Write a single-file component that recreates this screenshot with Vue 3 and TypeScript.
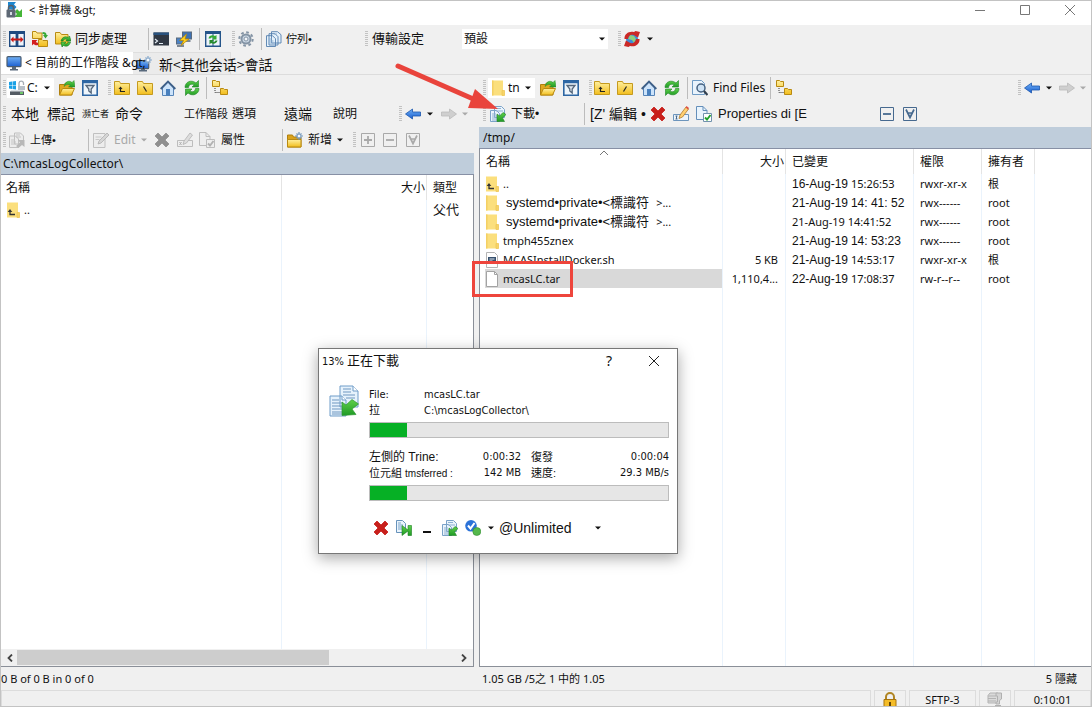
<script setup lang="ts">
interface RemoteFile {
  icon: string
  name: string
  size: string
  date: string
  time: string
  rights: string
  owner: string
  dateStyle: string
  timeStyle: string
  nameStyle: string
  selected?: boolean
}

const files: RemoteFile[] = [
  { icon: 'up-dir', name: '..', size: '', date: '16-Aug-19', time: '15:26:53', rights: 'rwxr-xr-x', owner: '根', dateStyle: 'arial', timeStyle: 'small', nameStyle: '' },
  { icon: 'dir', name: 'systemd•private•<標識符', size: '', date: '21-Aug-19', time: '14: 41: 52', rights: 'rwx------', owner: 'root', dateStyle: 'arial', timeStyle: 'arial', nameStyle: 'wide' },
  { icon: 'dir', name: 'systemd•private•<標識符', size: '', date: '21-Aug-19', time: '14:41:52', rights: 'rwx------', owner: 'root', dateStyle: 'small', timeStyle: 'small', nameStyle: 'wide' },
  { icon: 'dir', name: 'tmph455znex', size: '', date: '21-Aug-19', time: '14: 53:23', rights: 'rwx------', owner: 'root', dateStyle: 'arial', timeStyle: 'arial', nameStyle: '' },
  { icon: 'script', name: 'MCASInstallDocker.sh', size: '5 KB', date: '21-Aug-19', time: '14:53:17', rights: 'rwxr-xr-x', owner: '根', dateStyle: 'arial', timeStyle: 'small', nameStyle: '' },
  { icon: 'file', name: 'mcasLC.tar', size: '1,110,4...', date: '22-Aug-19', time: '17:08:37', rights: 'rw-r--r--', owner: 'root', dateStyle: 'arial', timeStyle: 'small', nameStyle: '', selected: true },
]

const progress = [12.5, 12.5]
</script>

<template>
  <div class="app">
    <svg class="sprite" aria-hidden="true">
      <defs>
        <linearGradient id="gFolder" x1="0" y1="0" x2="0" y2="1"><stop offset="0" stop-color="#fff0a0" /><stop offset="1" stop-color="#f2bd1c" /></linearGradient>
        <linearGradient id="gGreen" x1="0" y1="0" x2="0" y2="1"><stop offset="0" stop-color="#5fd04a" /><stop offset="1" stop-color="#1f9a25" /></linearGradient>
        <linearGradient id="gBlue" x1="0" y1="0" x2="0" y2="1"><stop offset="0" stop-color="#6fb0f5" /><stop offset="1" stop-color="#1b5fd0" /></linearGradient>
      </defs>
      <symbol id="logo" viewBox="0 0 16 16">
        <path d="M2 0h8L8 2.500 10.500 5 8 8 2 7z" fill="#1d87cf" /><path d="M16 15H8l3-3-2-2 2-3 2.500 2.500L16 7z" fill="#45b537" />
        <path d="M2.500 8V6a2.500 2.500 0 0 1 5 0v2" fill="none" stroke="#56606c" stroke-width="1.500" /><rect x=".5" y="7.500" width="9" height="8" rx="1" fill="#5e6875" /><path d="M4 10h2v3H4z" fill="#d5dce4" />
      </symbol>
      <symbol id="split" viewBox="0 0 16 16">
        <path d="M.7.7h6.600v14.600H.7zM8.700.7h6.600v14.600H8.700z" fill="#edf4fb" stroke="#1e4a80" stroke-width="1.400" /><path d="M1 2h6M9 2h6" stroke="#1e4a80" stroke-width="2" />
        <path d="M1.500 8.500 4.500 5.500v2h7v-2l3 3-3 3v-2h-7v2z" fill="#c91815" />
      </symbol>
      <symbol id="compare" viewBox="0 0 16 16">
        <path d="M.5.500h3.500l1 1.500h5v5.500H.5zM6.500 8.500H10l1 1h4.500v6h-9z" fill="url(#gFolder)" stroke="#b98a12" />
        <path d="M10.500 1c3 0 4 1 4 3H16l-2.500 3.500L11 4h1.500c0-1-1-1-2-1z" fill="#34a836" /><path d="M6 11.500c-1 .5-2 0-2-1L5.500 9H0v5.500L1.500 13C3 14.500 5 14.500 6 14z" fill="#d32020" />
      </symbol>
      <symbol id="sync" viewBox="0 0 16 16">
        <path d="M.5 1.500h4.500l1.500 2h6.500v9.500H.5z" fill="url(#gFolder)" stroke="#b98a12" />
        <path d="M6 10c1-4 4.500-5 7-3.500L14.500 5l1.500 5h-5l1-1.500c-1.500-1-3-.5-4 1.500z" fill="url(#gGreen)" stroke="#177a1c" stroke-width=".6" /><path d="M15.500 11c-1 4-4 5-7 3.500L7 16l-1-5h5l-1.500 1.500c1.500 1 3 .5 4-1.500z" fill="url(#gGreen)" stroke="#177a1c" stroke-width=".6" />
      </symbol>
      <symbol id="term" viewBox="0 0 16 16"><rect x=".5" y="1.500" width="15.500" height="13" fill="#303843" /><path d="M.5 1.500H16v2.500H.5z" fill="#29527e" /><path d="m2 8 2.500 2L2 12M6 12.500h4" fill="none" stroke="#e5edf5" stroke-width="1.200" /></symbol>
      <symbol id="putty" viewBox="0 0 16 16">
        <rect x="6.500" y="1" width="9" height="7" fill="#3e72b4" stroke="#5a6a7c" /><path d="M8.500 10h6" stroke="#7c8793" stroke-width="2" /><rect x=".5" y="7" width="7" height="6" fill="#4b82c5" stroke="#5a6a7c" /><path d="M1 15h7" stroke="#7c8793" stroke-width="2" />
        <path d="M10.500 3 3.500 9.500h4L5 14.500 13 8H9z" fill="#ffd01e" stroke="#b68500" stroke-width=".7" />
      </symbol>
      <symbol id="panes-sync" viewBox="0 0 16 16">
        <path d="M.7.7h14.600v14.600H.7z" fill="#edf4fb" stroke="#245489" stroke-width="1.400" /><path d="M1 2h14" stroke="#245489" stroke-width="2" /><path d="M8 2v13" stroke="#245489" />
        <path d="M3.500 7.500c.5-3 4-4 6.500-2.500L11.500 4v4.500H7L8.500 7C7 6.200 5.800 6.500 5.500 7.500z" fill="#36ac35" /><path d="M12.500 9.500c-.5 3-4 4-6.500 2.500L4.500 13.500V9H9l-1.500 1.500c1.500.8 2.700 0 3-1z" fill="#258b2c" />
      </symbol>
      <symbol id="gear" viewBox="0 0 16 16"><circle cx="8" cy="8" r="6.700" fill="none" stroke="#8494a5" stroke-width="2" stroke-dasharray="2.700 2.560" /><circle cx="8" cy="8" r="4.500" fill="#cbd8e5" stroke="#8494a5" stroke-width="2" /><circle cx="8" cy="8" r="2" fill="#f3f6fa" stroke="#8494a5" /></symbol>
      <symbol id="queue" viewBox="0 0 16 16"><path d="M5.500.7h6l3.500 3V12H5.500zM3 2.700h6l3 3V14H3zM.5 4.700h6l3 3v7.800h-9z" fill="#e5f1fb" stroke="#537fae" stroke-width=".9" /><path d="M2.500 8h3M2.500 10h5M2.500 12h5M8 3h3" stroke="#8fb1d2" /></symbol>
      <symbol id="globe" viewBox="0 0 16 16"><circle cx="8" cy="8" r="6" fill="#3f8bda" /><path d="m6 4 4 1 2 3-2 4-2-3-4-1z" fill="#8fd07c" /><path d="M.5 8C0 3 5-.5 10 1l1.500-1 4.500 1-2 5.500-2.500-1.500C8 2.500 4.500 4 4 8z" fill="#cb2927" /><path d="M15.500 8c.5 5-4.500 8.500-9.500 7L4.500 16 0 15l2-5.500L4.500 11c3.500 2.500 7 1 7.500-3z" fill="#cb2927" /></symbol>
      <symbol id="monitor" viewBox="0 0 16 16"><rect x="1" y="1.700" width="14" height="10" rx="1" fill="url(#gBlue)" stroke="#4a5c70" stroke-width="1.200" /><path d="M6 12h4v2H6zM4 14h8v1.500H4z" fill="#58697c" /></symbol>
      <symbol id="new-session" viewBox="0 0 16 16"><rect x=".7" y="4.700" width="12" height="8" rx="1" fill="url(#gBlue)" stroke="#4a5c70" stroke-width="1.200" /><path d="M5 13h4v1H5zM3 14h8v1.500H3z" fill="#58697c" /><path d="M12 0v8M8 4h8M9.500 1.500l5 5M14.500 1.500l-5 5" stroke="#86a8cb" stroke-width="1.200" /><circle cx="12" cy="4" r="2" fill="#f7fbff" stroke="#86a8cb" /></symbol>
      <symbol id="drive" viewBox="0 0 16 16"><path d="m0 2 3-.4V5H0zm3.500-.5L7 1v4H3.500zM0 5.500h3V9l-3-.4zm3.500 0H7v4L3.500 9z" fill="#1ba1e6" /><path d="M10 6V3a2.300 2.300 0 0 1 4.500 0v2" fill="none" stroke="#a6adb5" stroke-width="1.300" /><path d="M9 6h7v4H9z" fill="#b8c0c8" /><path d="M2 10h12l1 2H1z" fill="#dce1e6" /><path d="M1 11.500h14V15H1z" fill="#545b64" /><path d="M11 13h3" stroke="#79ea6d" stroke-width="1.500" /></symbol>
      <symbol id="open" viewBox="0 0 16 16"><path d="M.5 4.500h5l1-1.500h6.500v12H.5z" fill="#e0a820" stroke="#b0800f" /><path d="M3.500 8.500h12l-3 6.500H.5z" fill="url(#gFolder)" stroke="#b98a12" /><path d="M5 6.500C6 1.500 10 0 13 2.500L15 .5 16 7H9.500l1.800-1.800C9 4 7 4.500 5 6.500z" fill="url(#gGreen)" stroke="#24852a" stroke-width=".5" /></symbol>
      <symbol id="filter" viewBox="0 0 16 16"><path d="M.8.8h14.400v14.400H.8z" fill="#eef5fb" stroke="#2d66a3" stroke-width="1.600" /><path d="M1 2h14" stroke="#2d66a3" stroke-width="2.500" /><path d="M4 5.500h8L9.200 9v4L6.800 11V9z" fill="#dfe7ef" stroke="#56687c" stroke-width="1.300" /></symbol>
      <symbol id="parent" viewBox="0 0 16 16"><path d="M.5 1.500h5l1 2h9v11H.5z" fill="url(#gFolder)" stroke="#c59a1e" /><path d="M6.500 8v3.500H11" fill="none" stroke="#222" stroke-width="1.200" /><path d="m4.500 9 2-2.500 2 2.500z" fill="#222" /></symbol>
      <symbol id="root-local" viewBox="0 0 16 16"><path d="M.5 1.500h5l1 2h9v11H.5z" fill="url(#gFolder)" stroke="#c59a1e" /><path d="m6.500 6.500 3 5" stroke="#222" stroke-width="1.200" /></symbol>
      <symbol id="root-remote" viewBox="0 0 16 16"><path d="M.5 1.500h5l1 2h9v11H.5z" fill="url(#gFolder)" stroke="#c59a1e" /><path d="m9.500 6.500-3 5" stroke="#222" stroke-width="1.200" /></symbol>
      <symbol id="home" viewBox="0 0 16 16"><path d="M2.500 7 8 2l5.500 5v8.500h-11z" fill="#cce3fa" stroke="#5684b8" /><path d="M.7 9 8 1.500 15.300 9" fill="none" stroke="#3d5f88" stroke-width="1.900" /><path d="M6 9h4v6.500H6z" fill="#4980bd" /></symbol>
      <symbol id="refresh" viewBox="0 0 16 16"><path d="M1 7.500C1 2 7-1 12 3l2.500-2.500V7H8l2.300-2.300C7 3.500 5 4.500 4.500 7.500z" fill="url(#gGreen)" stroke="#1c8423" stroke-width=".6" /><path d="M15 8.500C15 14 9 17 4 13l-2.500 2.500V9H8l-2.300 2.300C9 12.500 11 11.500 11.500 8.500z" fill="url(#gGreen)" stroke="#1c8423" stroke-width=".6" /></symbol>
      <symbol id="tree" viewBox="0 0 16 16"><path d="M.5.500h3l1 1h3v5h-7zM8.500 8.500h3l1 1h3v5h-7z" fill="url(#gFolder)" stroke="#b98a12" /><path d="M3 8v4.500h5" fill="none" stroke="#333" stroke-dasharray="1 1" /></symbol>
      <symbol id="back" viewBox="0 0 16 16"><path d="m.5 8 7-5v3h8v4h-8v3z" fill="url(#gBlue)" stroke="#1a55ad" stroke-width=".8" /></symbol>
      <symbol id="forward" viewBox="0 0 16 16"><path d="m15.500 8-7-5v3h-8v4h8v3z" fill="#cfcfcf" stroke="#bababa" stroke-width=".8" /></symbol>
      <symbol id="down" viewBox="0 0 6 4"><path d="M0 .5h6L3 3.500z" fill="currentColor" /></symbol>
      <symbol id="upload" viewBox="0 0 16 16"><path d="M5.500 1h6l3 3v8h-9zM.5 4h6l3 3v8.500h-9z" fill="#ececec" stroke="#c0c0c0" /><path d="M2 8h4M2 10h5M2 12h5M7 3h4M7 5h5" stroke="#c4c4c4" /><path d="m7 14 4-3.500L9 8h6.500v7L13 13l-3.500 3z" fill="#b8b8b8" /></symbol>
      <symbol id="edit" viewBox="0 0 16 16"><path d="M.5 1.500H12v14H.5z" fill="#ededed" stroke="#c0c0c0" /><path d="M2.500 5h6M2.500 7.500h4" stroke="#c8c8c8" /><path d="m5 12 1-3 8-8 2 2-8 8z" fill="#d6d6d6" stroke="#b0b0b0" stroke-width=".8" /></symbol>
      <symbol id="x" viewBox="0 0 16 16"><path d="M4 1 8 5l4-4 3 3-4 4 4 4-3 3-4-4-4 4-3-3 4-4-4-4z" fill="currentColor" stroke="currentColor" stroke-width=".8" stroke-linejoin="round" /></symbol>
      <symbol id="rename" viewBox="0 0 16 16"><path d="M.5 8.500h15v6H.5z" fill="#edf5fc" stroke="#6d95bc" /><path d="M2.500 10h2M3.500 10v3M2.500 13h2" stroke="#48688b" /><path d="M6 12.500 7 9l6-8 2.500 2-6 8z" fill="#ffd072" stroke="#b07a2b" stroke-width=".8" /><path d="m12.500 1.500 1-1.500L16 2l-1 1.500z" fill="#df5144" /></symbol>
      <symbol id="rename-off" viewBox="0 0 16 16"><path d="M.5 8.500h15v6H.5z" fill="#eee" stroke="#bdbdbd" /><path d="m2.500 10 2 3M4.500 10l-2 3" stroke="#b2b2b2" /><path d="M6 12.500 7 9l6-8 2.500 2-6 8z" fill="#ddd" stroke="#b2b2b2" stroke-width=".8" /></symbol>
      <symbol id="props" viewBox="0 0 16 16"><path d="M.5.500h6.500l4 4v9H.5z" fill="#e9f4fd" stroke="#648fba" /><path d="M7 .5v4h4" fill="none" stroke="#648fba" /><path d="M7.500 7.500h8v8h-8z" fill="#fff" stroke="#7192ad" /><path d="m9 11.500 2 2 3.500-4.500" fill="none" stroke="#20a12c" stroke-width="1.900" /></symbol>
      <symbol id="props-off" viewBox="0 0 16 16"><path d="M.5.500h6.500l4 4v9H.5z" fill="#eee" stroke="#bdbdbd" /><path d="M7 .5v4h4" fill="none" stroke="#bdbdbd" /><path d="M7.500 7.500h8v8h-8z" fill="#eee" stroke="#bdbdbd" /><path d="m9 11.500 2 2 3.500-4.500" fill="none" stroke="#b2b2b2" stroke-width="1.900" /></symbol>
      <symbol id="new-dir" viewBox="0 0 16 16"><path d="M.5 3h5l1 2H14v10H.5z" fill="#dba31c" stroke="#b0800f" /><path d="M.5 7.500H14V15H.5z" fill="url(#gFolder)" stroke="#b98a12" /><path d="M12 0v8M8 4h8M9.500 1.500l5 5M14.500 1.500l-5 5" stroke="#7196bd" stroke-width="1.200" /><circle cx="12" cy="4" r="2" fill="#f7fbff" stroke="#7196bd" /></symbol>
      <symbol id="plus" viewBox="0 0 16 16"><path d="M1.500 1.500h13v13h-13z" fill="none" stroke="currentColor" /><path d="M4 8h8M8 4v8" stroke="currentColor" stroke-width="1.800" /></symbol>
      <symbol id="minus" viewBox="0 0 16 16"><path d="M1.500 1.500h13v13h-13z" fill="none" stroke="currentColor" /><path d="M4 8h8" stroke="currentColor" stroke-width="1.800" /></symbol>
      <symbol id="vee" viewBox="0 0 16 16"><path d="M1.500 1.500h13v13h-13z" fill="none" stroke="currentColor" /><path d="m4 3.500 4 8 4-8M5 7h6" fill="none" stroke="currentColor" stroke-width="1.700" /></symbol>
      <symbol id="find" viewBox="0 0 16 16"><path d="M.5.500h9l3 3v11H.5z" fill="#e9f3fc" stroke="#6f9bc4" /><circle cx="9" cy="8" r="4" fill="#cfe3f5" stroke="#466280" stroke-width="1.500" /><path d="m12 11 3.500 4" stroke="#333f4d" stroke-width="2.200" /></symbol>
      <symbol id="download" viewBox="0 0 16 16"><path d="M4.500.500h7l3 3v8h-10zM.5 4.500h6l3 3v8h-9z" fill="#eaf4fc" stroke="#7ba2c8" /><path d="M2 8h4M2 10h5M2 12h5M2 14h5M6 2.500h5M6 5h7" stroke="#8fb1d2" /><path d="m16 8.500-3.500 3.500 2 3.500H7V8l2.500 2L13 6.500z" fill="url(#gGreen)" stroke="#1b7f22" stroke-width=".6" /></symbol>
      <symbol id="download-big" viewBox="0 0 30 32"><path d="M11 1h13l5 5v16H11zM1 11h12l4 4v16H1z" fill="#e6f2fc" stroke="#6f9cc8" /><path d="M24 1v5h5M13 11v4h4" fill="#fff" stroke="#6f9cc8" /><path d="M3 15h7M3 18h11M3 21h11M3 24h11M3 27h11M3 29h11M14 4h8M14 7h8M14 10h12M17 13h9" stroke="#6f97c0" /><path d="M23 14.500 29.500 19 23 24l4 5.500-14 1V17l4 3z" fill="url(#gGreen)" stroke="#2c9630" stroke-width=".7" /></symbol>
      <symbol id="skip" viewBox="0 0 16 16"><path d="M.5.500h6l3 3v9H.5z" fill="#eaf4fc" stroke="#6792bb" /><path d="M2 3h3M2 5h5M2 7h4M2 9h4" stroke="#7da5ca" /><path d="M6 5.500v10l6-4.500v4.500h3.500v-10H12V10z" fill="url(#gGreen)" stroke="#1b7f22" stroke-width=".6" /></symbol>
      <symbol id="done" viewBox="0 0 16 16"><circle cx="6" cy="5.800" r="5.800" fill="#2b72d8" /><path d="m3 5.500 2.500 3L9.500 3" fill="none" stroke="#fff" stroke-width="2" /><circle cx="11.800" cy="11.500" r="4" fill="#55b84c" stroke="#348c32" stroke-width=".6" /></symbol>
      <symbol id="dir" viewBox="0 0 14 16"><path d="M1 .5h11v10h1.500v5H1z" fill="#fbdf7d" /><path d="M1 .5h1.500v15H1z" fill="#f4d064" /><path d="M11 10.500h2.500v5H11z" fill="#f6d469" stroke="#edc14b" stroke-width=".6" /></symbol>
      <symbol id="up-dir" viewBox="0 0 14 16"><path d="M1 .5h11v10h1.500v5H1z" fill="#fbdf7d" /><path d="M11 10.500h2.500v5H11z" fill="#f6d469" stroke="#edc14b" stroke-width=".6" /><path d="M4 8.500v4h5" fill="none" stroke="#333" stroke-width="1.300" /><path d="M1.700 10 4 7l2.300 3z" fill="#333" /></symbol>
      <symbol id="script" viewBox="0 0 14 16"><path d="M1.500.500h8l3 3v12h-11z" fill="#fff" stroke="#b5b5b5" /><path d="M3 5h8v6H3z" fill="#36506e" /><path d="M4.500 7h5M4.500 9h3" stroke="#dfe7ef" /></symbol>
      <symbol id="file" viewBox="0 0 14 16"><path d="M1.500.500h8l3 3v12h-11z" fill="#fff" stroke="#a3a3a3" /><path d="M9.500.500v3h3" fill="none" stroke="#a3a3a3" /></symbol>
      <symbol id="lock" viewBox="0 0 16 16"><path d="M4 8V5a4 4 0 0 1 8 0v3" fill="none" stroke="#b08524" stroke-width="2" /><path d="M2 7.500h12v8.500H2z" fill="#f4bc28" stroke="#a8740c" /><path d="M7 10h2v4H7z" fill="#624509" /></symbol>
      <symbol id="zip" viewBox="0 0 16 16"><path d="M1 3.500 3 1h8v10H1z" fill="#dadada" stroke="#b3b3b3" /><path d="M1 4h8M1 6.500h8M1 9h8" stroke="#b3b3b3" /><path d="M9 1h5.500v6l-2 1.500V12H9v-2h1.500V4H9z" fill="#d4d4d4" stroke="#b0b0b0" /><path d="M8 14h6" stroke="#b0b0b0" stroke-width="2" /></symbol>
      <symbol id="left" viewBox="0 0 8 8"><path d="M6 .5 2.500 4 6 7.500" fill="none" stroke="#444" stroke-width="1.800" /></symbol>
      <symbol id="right" viewBox="0 0 8 8"><path d="M2 .5 5.500 4 2 7.500" fill="none" stroke="#444" stroke-width="1.800" /></symbol>
    </svg>

    <header class="titlebar">
      <svg class="ic"><use href="#logo" /></svg>
      <h1>&lt; 計算機 &amp;gt;</h1>
      <button class="win" aria-label="Minimize"><svg viewBox="0 0 12 12"><path d="M1 6.500h10" /></svg></button>
      <button class="win" aria-label="Maximize"><svg viewBox="0 0 12 12"><path d="M1.500 1.500h9v9h-9z" /></svg></button>
      <button class="win" aria-label="Close"><svg viewBox="0 0 12 12"><path d="m1 1 10 10M11 1 1 11" /></svg></button>
    </header>

    <div class="bar main-bar">
      <i class="grip" />
      <button aria-label="Layout"><svg class="ic"><use href="#split" /></svg></button>
      <button aria-label="Compare"><svg class="ic"><use href="#compare" /></svg></button>
      <button aria-label="Synchronize"><svg class="ic"><use href="#sync" /></svg></button>
      <button class="t13">同步處理</button>
      <i class="sep" />
      <button aria-label="Console"><svg class="ic"><use href="#term" /></svg></button>
      <button aria-label="Terminal"><svg class="ic"><use href="#putty" /></svg></button>
      <i class="sep" />
      <button aria-label="Browse together"><svg class="ic"><use href="#panes-sync" /></svg></button>
      <i class="grip" />
      <button aria-label="Preferences"><svg class="ic"><use href="#gear" /></svg></button>
      <i class="sep" />
      <button aria-label="Queue"><svg class="ic"><use href="#queue" /></svg></button>
      <button class="t11">佇列•</button>
      <i class="grip" />
      <label class="t13" for="preset">傳輸設定</label>
      <span class="combo preset"><select id="preset"><option>預設</option></select><svg class="dn"><use href="#down" /></svg></span>
      <i class="grip" />
      <button aria-label="Reconnect"><svg class="ic"><use href="#globe" /></svg></button>
      <button aria-label="Reconnect menu"><svg class="dn"><use href="#down" /></svg></button>
    </div>

    <nav class="tabs">
      <button class="tab active"><svg class="ic"><use href="#monitor" /></svg><span>&lt; 目前的工作階段 &amp;gt;</span></button>
      <button class="tab fresh"><svg class="ic"><use href="#new-session" /></svg><span>新&lt;其他会话&gt;會話</span></button>
    </nav>

    <main class="panels">
      <section class="panel local">
        <div class="bar local-nav">
          <i class="grip" />
          <span class="combo place"><svg class="ic"><use href="#drive" /></svg><select aria-label="Drive"><option>C:</option></select><svg class="dn"><use href="#down" /></svg></span>
          <button aria-label="Open directory"><svg class="ic"><use href="#open" /></svg></button>
          <button aria-label="Filter"><svg class="ic"><use href="#filter" /></svg></button>
          <i class="grip" />
          <button aria-label="Parent directory"><svg class="ic"><use href="#parent" /></svg></button>
          <button aria-label="Root directory"><svg class="ic"><use href="#root-local" /></svg></button>
          <button aria-label="Home directory"><svg class="ic"><use href="#home" /></svg></button>
          <button aria-label="Refresh"><svg class="ic"><use href="#refresh" /></svg></button>
          <i class="sep" />
          <button aria-label="Tree"><svg class="ic"><use href="#tree" /></svg></button>
        </div>
        <div class="bar local-menu">
          <i class="grip" />
          <button class="t14">本地</button>
          <button class="t14">標記</button>
          <button class="t9">瀕亡者</button>
          <button class="t14">命令</button>
          <button class="t11">工作階段</button>
          <button class="t12">選項</button>
          <button class="t14">遠端</button>
          <button class="t12">說明</button>
          <i class="grip" />
          <button aria-label="Back"><svg class="ic"><use href="#back" /></svg></button>
          <button aria-label="Back history"><svg class="dn"><use href="#down" /></svg></button>
          <button aria-label="Forward"><svg class="ic"><use href="#forward" /></svg></button>
          <button class="off" aria-label="Forward history"><svg class="dn"><use href="#down" /></svg></button>
        </div>
        <div class="bar local-tools">
          <i class="grip" />
          <button aria-label="Upload"><svg class="ic"><use href="#upload" /></svg></button>
          <button class="t11">上傳•</button>
          <i class="sep" />
          <button aria-label="Edit file"><svg class="ic"><use href="#edit" /></svg></button>
          <button class="off ui">Edit</button>
          <button class="off" aria-label="Edit menu"><svg class="dn"><use href="#down" /></svg></button>
          <button class="off-x" aria-label="Delete"><svg class="ic"><use href="#x" /></svg></button>
          <button aria-label="Rename"><svg class="ic"><use href="#rename-off" /></svg></button>
          <button aria-label="Properties"><svg class="ic"><use href="#props-off" /></svg></button>
          <button class="t12">屬性</button>
          <i class="sep" />
          <button aria-label="New directory"><svg class="ic"><use href="#new-dir" /></svg></button>
          <button class="t12">新增</button>
          <button aria-label="New menu"><svg class="dn"><use href="#down" /></svg></button>
          <i class="grip" />
          <button class="off" aria-label="Select"><svg class="ic"><use href="#plus" /></svg></button>
          <button class="off" aria-label="Unselect"><svg class="ic"><use href="#minus" /></svg></button>
          <button class="off" aria-label="Select all"><svg class="ic"><use href="#vee" /></svg></button>
        </div>
        <div class="path">C:\mcasLogCollector\</div>
        <div class="list">
          <table class="local-table">
            <colgroup><col><col class="c-lsize"><col class="c-type"></colgroup>
            <thead><tr><th>名稱</th><th class="num">大小</th><th>類型</th></tr></thead>
            <tbody>
              <tr><td><span class="entry"><svg class="fi"><use href="#up-dir" /></svg>..</span></td><td /><td class="t13">父代</td></tr>
              <tr class="rest"><td /><td /><td /></tr>
            </tbody>
          </table>
          <div class="scroll">
            <button aria-label="Scroll left"><svg><use href="#left" /></svg></button>
            <div class="track"><div class="thumb" /></div>
            <button aria-label="Scroll right"><svg><use href="#right" /></svg></button>
          </div>
        </div>
        <div class="summary"><span>0 B of 0 B in 0 of 0</span></div>
      </section>

      <section class="panel remote">
        <div class="bar remote-nav">
          <i class="grip" />
          <span class="combo place"><svg class="ic"><use href="#dir" /></svg><select aria-label="Remote directory"><option>tn</option></select><svg class="dn"><use href="#down" /></svg></span>
          <button aria-label="Open directory"><svg class="ic"><use href="#open" /></svg></button>
          <button aria-label="Filter"><svg class="ic"><use href="#filter" /></svg></button>
          <i class="grip" />
          <button aria-label="Parent directory"><svg class="ic"><use href="#parent" /></svg></button>
          <button aria-label="Root directory"><svg class="ic"><use href="#root-remote" /></svg></button>
          <button aria-label="Home directory"><svg class="ic"><use href="#home" /></svg></button>
          <button aria-label="Refresh"><svg class="ic"><use href="#refresh" /></svg></button>
          <i class="sep" />
          <button aria-label="Find"><svg class="ic"><use href="#find" /></svg></button>
          <button class="ui">Find Files</button>
          <i class="sep" />
          <button aria-label="Tree"><svg class="ic"><use href="#tree" /></svg></button>
          <i class="grip" />
          <button aria-label="Back"><svg class="ic"><use href="#back" /></svg></button>
          <button aria-label="Back history"><svg class="dn"><use href="#down" /></svg></button>
          <button aria-label="Forward"><svg class="ic"><use href="#forward" /></svg></button>
          <button class="off" aria-label="Forward history"><svg class="dn"><use href="#down" /></svg></button>
        </div>
        <div class="bar remote-tools">
          <i class="grip" />
          <button aria-label="Download"><svg class="ic"><use href="#download" /></svg></button>
          <button class="t12">下載•</button>
          <i class="sep" />
          <button class="t14">[Z' 編輯 •</button>
          <button class="red" aria-label="Delete"><svg class="ic"><use href="#x" /></svg></button>
          <button aria-label="Rename"><svg class="ic"><use href="#rename" /></svg></button>
          <button aria-label="Properties"><svg class="ic"><use href="#props" /></svg></button>
          <button class="t13">Properties di [E</button>
          <button class="blue" aria-label="Unselect"><svg class="ic"><use href="#minus" /></svg></button>
          <button class="blue" aria-label="Select all"><svg class="ic"><use href="#vee" /></svg></button>
        </div>
        <div class="path">/tmp/</div>
        <div class="list">
          <table class="remote-table">
            <colgroup><col class="c-name"><col class="c-size"><col class="c-date"><col class="c-rights"><col class="c-owner"><col></colgroup>
            <thead>
              <tr>
                <th aria-sort="ascending">名稱<svg class="sort" viewBox="0 0 10 6"><path d="m1 5 4-4 4 4" /></svg></th>
                <th class="num">大小</th><th>已變更</th><th>權限</th><th>擁有者</th><th />
              </tr>
            </thead>
            <tbody>
              <tr v-for="(f, i) in files" :key="i">
                <td class="name-cell">
                  <span class="entry" :class="{ selected: f.selected }">
                    <svg class="fi"><use :href="'#' + f.icon" /></svg>
                    <span :class="f.nameStyle">{{ f.name }}</span>
                    <span v-if="f.nameStyle" class="more">&gt;...</span>
                  </span>
                  <span v-if="f.selected" class="highlight" />
                </td>
                <td class="num size">{{ f.size }}</td>
                <td><span :class="f.dateStyle">{{ f.date }}</span> <span :class="f.timeStyle">{{ f.time }}</span></td>
                <td>{{ f.rights }}</td>
                <td>{{ f.owner }}</td>
                <td />
              </tr>
              <tr class="rest"><td /><td /><td /><td /><td /><td /></tr>
            </tbody>
          </table>
        </div>
        <div class="summary"><span>1.05 GB /5之 1 中的 1.05</span><span>5 隱藏</span></div>
        <svg class="pointer" viewBox="0 0 106 56" aria-hidden="true"><path d="M4 5 77 37" stroke="#e9443c" stroke-width="5" stroke-linecap="round" /><path d="m81 28 23 20-30-1z" fill="#e9443c" /></svg>
      </section>
    </main>

    <footer class="status">
      <span class="cell" />
      <span class="cell"><svg class="ic"><use href="#lock" /></svg></span>
      <span class="cell">SFTP-3</span>
      <span class="cell"><svg class="ic"><use href="#zip" /></svg></span>
      <span class="cell">0:10:01</span>
    </footer>

    <div class="dialog" role="dialog" aria-labelledby="dlg-title">
      <div class="dlg-head">
        <h2 id="dlg-title"><span class="pct">13%</span> 正在下載</h2>
        <button aria-label="Help">?</button>
        <button aria-label="Close"><svg viewBox="0 0 12 12"><path d="m1 1 10 10M11 1 1 11" /></svg></button>
      </div>
      <div class="dlg-body">
        <svg class="big"><use href="#download-big" /></svg>
        <div class="dlg-main">
          <dl class="target">
            <dt>File:</dt><dd>mcasLC.tar</dd>
            <dt>拉</dt><dd>C:\mcasLogCollector\</dd>
          </dl>
          <div class="meter" role="progressbar" :aria-valuenow="progress[0]"><div :style="{ width: progress[0] + '%' }" /></div>
          <dl class="stats">
            <dt class="t12">左側的 Trine:</dt><dd>0:00:32</dd><dt>復發</dt><dd>0:00:04</dd>
            <dt><span>位元組 </span><small>tmsferred :</small></dt><dd>142 MB</dd><dt>速度:</dt><dd>29.3 MB/s</dd>
          </dl>
          <div class="meter" role="progressbar" :aria-valuenow="progress[1]"><div :style="{ width: progress[1] + '%' }" /></div>
        </div>
      </div>
      <div class="dlg-tools">
        <button class="red" aria-label="Cancel"><svg class="ic"><use href="#x" /></svg></button>
        <button aria-label="Skip"><svg class="ic"><use href="#skip" /></svg></button>
        <button aria-label="Minimize"><svg class="ic" viewBox="0 0 16 16"><path d="M4 12h8" stroke="#111" stroke-width="2" /></svg></button>
        <button aria-label="Move to queue"><svg class="ic"><use href="#download" /></svg></button>
        <button aria-label="When done"><svg class="ic"><use href="#done" /></svg></button>
        <button aria-label="When done menu"><svg class="dn"><use href="#down" /></svg></button>
        <span class="combo speed"><select aria-label="Speed limit"><option>@Unlimited</option></select><svg class="dn"><use href="#down" /></svg></span>
      </div>
    </div>
  </div>
</template>

<style>
html,
body {
  height: 100%;
}
#app {
  height: 100%;
}
</style>

<style scoped>
* {
  box-sizing: border-box;
}
.app {
  position: relative;
  display: flex;
  flex-direction: column;
  min-height: 100%;
  border: 1px solid #c3c3c3;
  background: #f0f0f0;
  color: #111;
  font: 11px/16px "Noto Sans", "Noto Sans CJK TC", sans-serif;
  overflow: hidden;
  white-space: nowrap;
}
.sprite {
  position: absolute;
  width: 0;
  height: 0;
}
button,
select {
  display: flex;
  align-items: center;
  min-width: 0;
  margin: 0;
  padding: 0;
  border: 0;
  border-radius: 0;
  background: none;
  color: inherit;
  font: inherit;
  white-space: nowrap;
}
select {
  appearance: none;
  flex: 1;
  outline: 0;
}
.ic {
  flex: none;
  width: 16px;
  height: 16px;
}
.dn {
  flex: none;
  width: 6px;
  height: 4px;
}
.t9, .t11, .t12, .t13, .t14 {
  font-family: "Liberation Sans", "Noto Sans CJK TC", sans-serif;
}
.t9 { font-size: 9px; }
.t11 { font-size: 11px; }
.t12 { font-size: 12px; }
.t13 { font-size: 13px; }
.t14 { font-size: 14px; }
.ui { font-size: 12px; }
.off { color: #a9a9a9; }
.off-x { color: #8f8f8f; }
.red { color: #c8201c; }
.blue { color: #46698f; }

.titlebar {
  display: flex;
  align-items: center;
  height: 24px;
  padding: 0 6px 6px 5px;
  background: #fff;
}
.titlebar h1 {
  flex: 1;
  margin: 0 0 0 7px;
  font: 11px/16px "Noto Sans", "Noto Sans CJK TC", sans-serif;
}
.win {
  justify-content: center;
  width: 30px;
  margin-left: 15px;
}
.win svg {
  width: 12px;
  height: 12px;
  fill: none;
  stroke: #777;
}

.bar {
  display: grid;
  align-items: center;
  height: 26px;
  padding-left: 2px;
}
.grip {
  width: 3px;
  height: 16px;
  background: repeating-linear-gradient(#c2c2c2 0 1px, #f0f0f0 1px 2px);
}
.sep {
  width: 1px;
  height: 22px;
  background: #bcbcbc;
}
.combo {
  display: flex;
  align-items: center;
  height: 20px;
  background: #fff;
}
.main-bar {
  height: 27px;
  grid-template-columns: 6px 23px 23px 20px 73px 5px 23px 23px 6px 27px 6px 23px 5px 20px 79px 7px 90px 156px 6px 23px auto;
  justify-content: start;
}
.preset {
  width: 146px;
  padding: 0 3px 0 2px;
  font-size: 12px;
}
.tabs {
  display: flex;
  align-items: stretch;
  height: 23px;
  border-bottom: 1px solid #dcdcdc;
}
.tab {
  overflow: visible;
}
.tab.active {
  position: relative;
  z-index: 1;
  width: 132px;
  gap: 3px;
  padding-left: 5px;
  background: #fff;
  font-size: 12px;
}
.tab.fresh {
  width: 98px;
  gap: 7px;
  padding-left: 3px;
  border-top: 1px solid #dedede;
  border-right: 1px solid #dedede;
  background: #ebebeb;
  font-size: 14px;
  font-family: "Noto Sans CJK TC", "Noto Sans CJK SC", sans-serif;
}

.panels {
  display: flex;
  flex: 1;
  gap: 5px;
}
.panel {
  display: flex;
  flex-direction: column;
  min-width: 0;
}
.local {
  flex: 473 1 0;
}
.remote {
  position: relative;
  flex: 612 1 0;
}
.remote .bar {
  padding-left: 4px;
}
.local-nav {
  grid-template-columns: 4px 52px 23px 26px 6px 23px 23px 24px 22px 6px auto;
  justify-content: start;
}
.local-menu {
  grid-template-columns: 8px 36px 35px 33px 69px 48px 52px 49px 1fr 6px 22px 14px 21px 12px;
}
.local-tools {
  grid-template-columns: 6px 21px 58px 5px 21px 27px 13px 23px 22px 22px 61px 5px 21px 29px 16px 7px 22px 23px auto;
  justify-content: start;
}
.remote-nav {
  grid-template-columns: 5px 52px 23px 26px 5px 23px 24px 23px 23px 5px 21px 57px 6px 1fr 6px 22px 13px 21px 11px;
}
.remote-tools {
  grid-template-columns: 7px 21px 73px 6px 60px 23px 23px 22px 161px 23px auto;
  justify-content: start;
}
.place {
  width: 47px;
  gap: 2px;
  padding: 0 4px 0 2px;
  font-size: 12px;
}
.path {
  height: 22px;
  padding: 0 4px;
  border-bottom: 1px solid #8790a5;
  background: #bfcddb;
  font-size: 12px;
  line-height: 22px;
}
.local .path {
  padding-left: 2px;
}
.list {
  display: flex;
  flex: 1;
  flex-direction: column;
  border: solid #8a8f98;
  border-width: 0 0 1px;
  background: #fff;
}
.local .list {
  border-right-width: 1px;
}
.remote .list {
  border-left-width: 1px;
}
table {
  flex: 1;
  width: 100%;
  border-collapse: separate;
  border-spacing: 0;
  table-layout: fixed;
}
th,
td {
  height: 19px;
  padding: 0 0 0 6px;
  border-right: 1px solid #eaf3fc;
  text-align: left;
  font-weight: 400;
}
th {
  position: relative;
  height: 25px;
  border-color: #e4e4e4;
  font: 12px/16px "Liberation Sans", "Noto Sans CJK TC", sans-serif;
}
th:last-child,
td:last-child {
  border-right: 0;
}
.rest td {
  height: auto;
}
.num {
  padding-right: 1px;
  text-align: right;
}
.size {
  padding-right: 7px;
}
.c-lsize { width: 145px; }
.c-type { width: 46px; }
.local-table th:first-child,
.local-table td:first-child { padding-left: 5px; }
.c-name { width: 243px; }
.c-size { width: 63px; }
.c-date { width: 128px; }
.c-rights { width: 68px; }
.c-owner { width: 53px; }
.name-cell {
  position: relative;
  padding-left: 5px;
}
.sort {
  position: absolute;
  top: 1px;
  left: 49%;
  width: 10px;
  height: 6px;
  fill: none;
  stroke: #777;
}
.entry {
  display: flex;
  align-items: center;
  gap: 4px;
  height: 19px;
}
.selected {
  background: #d9d9d9;
}
.fi {
  flex: none;
  width: 14px;
  height: 16px;
}
.small {
  font-size: 11px;
}
.arial {
  font: 12px/16px "Liberation Sans", sans-serif;
}
.wide {
  padding-left: 3px;
  font: 13px/16px "Liberation Sans", "Noto Sans CJK TC", sans-serif;
}
.more {
  padding-left: 3px;
}
.highlight {
  position: absolute;
  top: -8px;
  left: -8px;
  width: 101px;
  height: 36px;
  border: 3px solid #ee453c;
}
.scroll {
  display: flex;
  height: 17px;
  padding: 0 2px;
  background: #f0f0f0;
}
.scroll button {
  justify-content: center;
  width: 14px;
}
.scroll svg {
  width: 8px;
  height: 8px;
}
.track {
  flex: 1;
}
.thumb {
  width: 71%;
  height: 15px;
  margin-top: 1px;
  background: #cdcdcd;
}
.summary {
  display: flex;
  justify-content: space-between;
  height: 23px;
  padding: 0 14px 0 3px;
  line-height: 24px;
}
.local .summary {
  padding-left: 0;
}
.pointer {
  position: absolute;
  top: -14px;
  left: -85px;
  width: 106px;
  height: 56px;
}
.status {
  display: flex;
  gap: 3px;
  height: 16px;
  overflow: hidden;
}
.cell {
  display: flex;
  justify-content: center;
  width: 32px;
  height: 20px;
  border: 1px solid #dcdcdc;
  border-bottom: 0;
  line-height: 18px;
}
.cell:first-child { flex: 1; }
.cell:nth-child(3) { width: 67px; }
.cell:nth-child(5) { width: 77px; }
.cell .ic {
  margin-top: 1px;
}

.dialog {
  position: absolute;
  top: 347px;
  left: 317px;
  width: 360px;
  padding-bottom: 13px;
  border: 1px solid #777;
  background: #fff;
  box-shadow: 0 4px 14px rgba(0, 0, 0, 0.35);
  font: 11px/16px "DejaVu Sans Condensed", "Noto Sans CJK TC", sans-serif;
}
.dlg-head {
  display: flex;
  align-items: center;
  height: 24px;
  padding: 0 11px 0 3px;
}
.dlg-head h2 {
  flex: 1;
  margin: 0;
  font: 13px/16px "Noto Sans CJK TC", sans-serif;
}
.pct {
  font: 11px/16px "DejaVu Sans Condensed", sans-serif;
}
.dlg-head button {
  justify-content: center;
  width: 24px;
  margin-left: 21px;
  font: 14px/16px "Noto Sans", sans-serif;
}
.dlg-head svg {
  width: 12px;
  height: 12px;
  fill: none;
  stroke: #222;
}
.dlg-body {
  display: flex;
  gap: 10px;
  padding: 12px 8px 0 10px;
}
.big {
  flex: none;
  width: 30px;
  height: 32px;
}
.dlg-main {
  flex: 1;
}
dl,
dd {
  margin: 0;
}
.target {
  display: grid;
  grid-template-columns: 55px 1fr;
  padding-top: 2px;
}
.meter {
  height: 16px;
  margin-top: 3px;
  border: 1px solid #bcbcbc;
  background: #e6e6e6;
}
.meter div {
  height: 100%;
  background: #06b025;
}
.stats {
  display: grid;
  grid-template-columns: 90px 62px 52px 1fr;
  padding-top: 11px;
}
.stats dd {
  text-align: right;
}
.stats dt:nth-of-type(2n) {
  padding-left: 10px;
}
.stats dt {
  font-family: "Liberation Sans", "Noto Sans CJK TC", sans-serif;
}
.stats small {
  font-size: 10px;
}
.dlg-tools {
  display: grid;
  grid-template-columns: 23px 23px 23px 23px 23px 11px 1fr;
  align-items: center;
  height: 24px;
  margin-top: 15px;
  padding-left: 54px;
}
.speed {
  width: 102px;
  font: 14px/16px "Liberation Sans", sans-serif;
}
</style>
